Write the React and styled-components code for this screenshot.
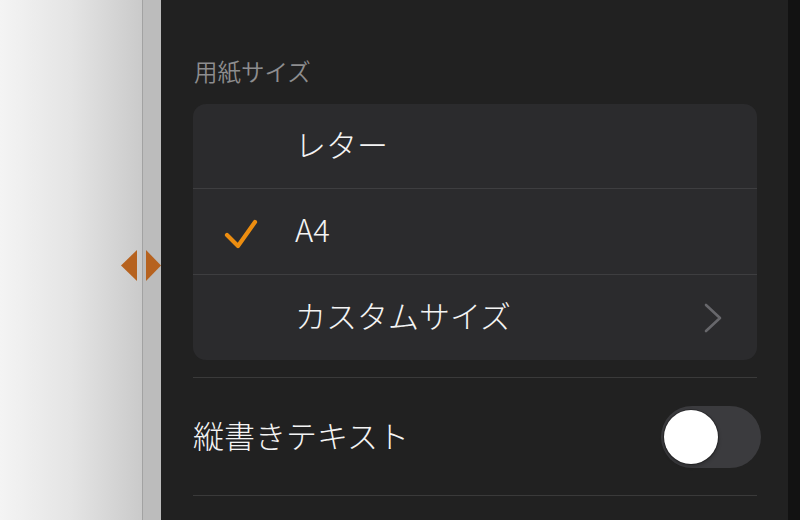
import styled, { createGlobalStyle } from "styled-components";

const GlobalStyle = createGlobalStyle`
    html, body {
        margin: 0;
        padding: 0;
        background: #212121;
    }
    * {
        box-sizing: border-box;
    }
`;

const FONT = `"Noto Sans CJK JP", "Noto Sans", sans-serif`;

function Check() {
    return (
        <svg width="36" height="32" viewBox="0 0 36 32">
            <path d="M4 18 L15 29 L32 5" fill="none" stroke="#ec8d10" strokeWidth="4.2" strokeLinecap="round" strokeLinejoin="round" />
        </svg>
    )
}

function Chevron() {
    return (
        <svg width="20" height="30" viewBox="0 0 20 30">
            <path d="M3 2 L17 15 L3 28" fill="none" stroke="#67676b" strokeWidth="2.6" strokeLinecap="round" strokeLinejoin="round" />
        </svg>
    )
}

function Option(props) {
    return (
        <Row>
            <Mark>{props.checked && <Check />}</Mark>
            <RowLabel>{props.name}</RowLabel>
            {props.more && <More><Chevron /></More>}
        </Row>
    )
}

export default function App() {
    return (
        <Container>
            <GlobalStyle />
            <Backdrop>
                <Split />
                <Handle>
                    <svg width="42" height="32" viewBox="0 0 42 32">
                        <polygon points="16,0 16,31 0,15.5" fill="#b6621f" />
                        <polygon points="25,0 25,31 40,15.5" fill="#b6621f" />
                    </svg>
                </Handle>
            </Backdrop>
            <Panel>
                <SectionLabel>用紙サイズ</SectionLabel>
                <Card>
                    <Option name="レター" />
                    <Option name="A4" checked />
                    <Option name="カスタムサイズ" more />
                </Card>
                <SettingRow>
                    <SettingLabel>縦書きテキスト</SettingLabel>
                    <Toggle>
                        <Knob />
                    </Toggle>
                </SettingRow>
            </Panel>
            <Edge />
        </Container>
    )
}

const Container = styled.div`
    width: 800px;
    height: 520px;
    display: flex;
    overflow: hidden;
    font-family: ${FONT};
`;

const Backdrop = styled.div`
    position: relative;
    width: 161px;
    flex-shrink: 0;
    display: flex;
    justify-content: flex-end;
    background: linear-gradient(to right, #f4f4f4 0%, #e4e4e4 45%, #c3c3c3 100%);
`;

const Split = styled.div`
    width: 19px;
    height: 100%;
    border-left: 1px solid #a2a2a2;
    background: #bcbcbc;
`;

const Handle = styled.div`
    position: absolute;
    left: 121px;
    top: 250px;
    display: flex;
`;

const Panel = styled.div`
    flex: 1;
    background: #212121;
    padding: 56px 31px 0 32px;
    display: flex;
    flex-direction: column;
`;

const SectionLabel = styled.div`
    font-size: 23.5px;
    font-weight: 350;
    line-height: 30px;
    color: #8d8d8f;
    margin-bottom: 18px;
    padding-left: 1px;
`;

const Card = styled.div`
    background: #2b2b2d;
    border-radius: 13px;
    overflow: hidden;
`;

const Row = styled.div`
    height: 84px;
    display: flex;
    align-items: center;
    & + & {
        border-top: 1px solid #3e3e40;
        height: 86px;
    }
`;

const Mark = styled.div`
    width: 102px;
    flex-shrink: 0;
    padding-left: 30px;
    padding-top: 2px;
    display: flex;
    align-items: center;
`;

const RowLabel = styled.div`
    flex: 1;
    font-size: 31px;
    font-weight: 300;
    color: #f4f4f4;
    padding-bottom: 6px;
`;

const More = styled.div`
    display: flex;
    align-items: center;
    margin-right: 34px;
`;

const SettingRow = styled.div`
    margin-top: 17px;
    height: 119px;
    border-top: 1px solid #3a3a3a;
    border-bottom: 1px solid #3a3a3a;
    display: flex;
    align-items: center;
    justify-content: space-between;
`;

const SettingLabel = styled.div`
    font-size: 31px;
    font-weight: 300;
    color: #f4f4f4;
    padding-bottom: 4px;
`;

const Toggle = styled.div`
    width: 100px;
    height: 62px;
    border-radius: 31px;
    background: #3b3b3e;
    margin-right: -4px;
    display: flex;
    align-items: center;
    padding-left: 3px;
`;

const Knob = styled.div`
    width: 54px;
    height: 54px;
    border-radius: 50%;
    background: #ffffff;
    box-shadow: 0 0 0 1px rgba(0, 0, 0, 0.25), 0 2px 4px rgba(0, 0, 0, 0.3);
`;

const Edge = styled.div`
    width: 12px;
    flex-shrink: 0;
    background: #121212;
`;
